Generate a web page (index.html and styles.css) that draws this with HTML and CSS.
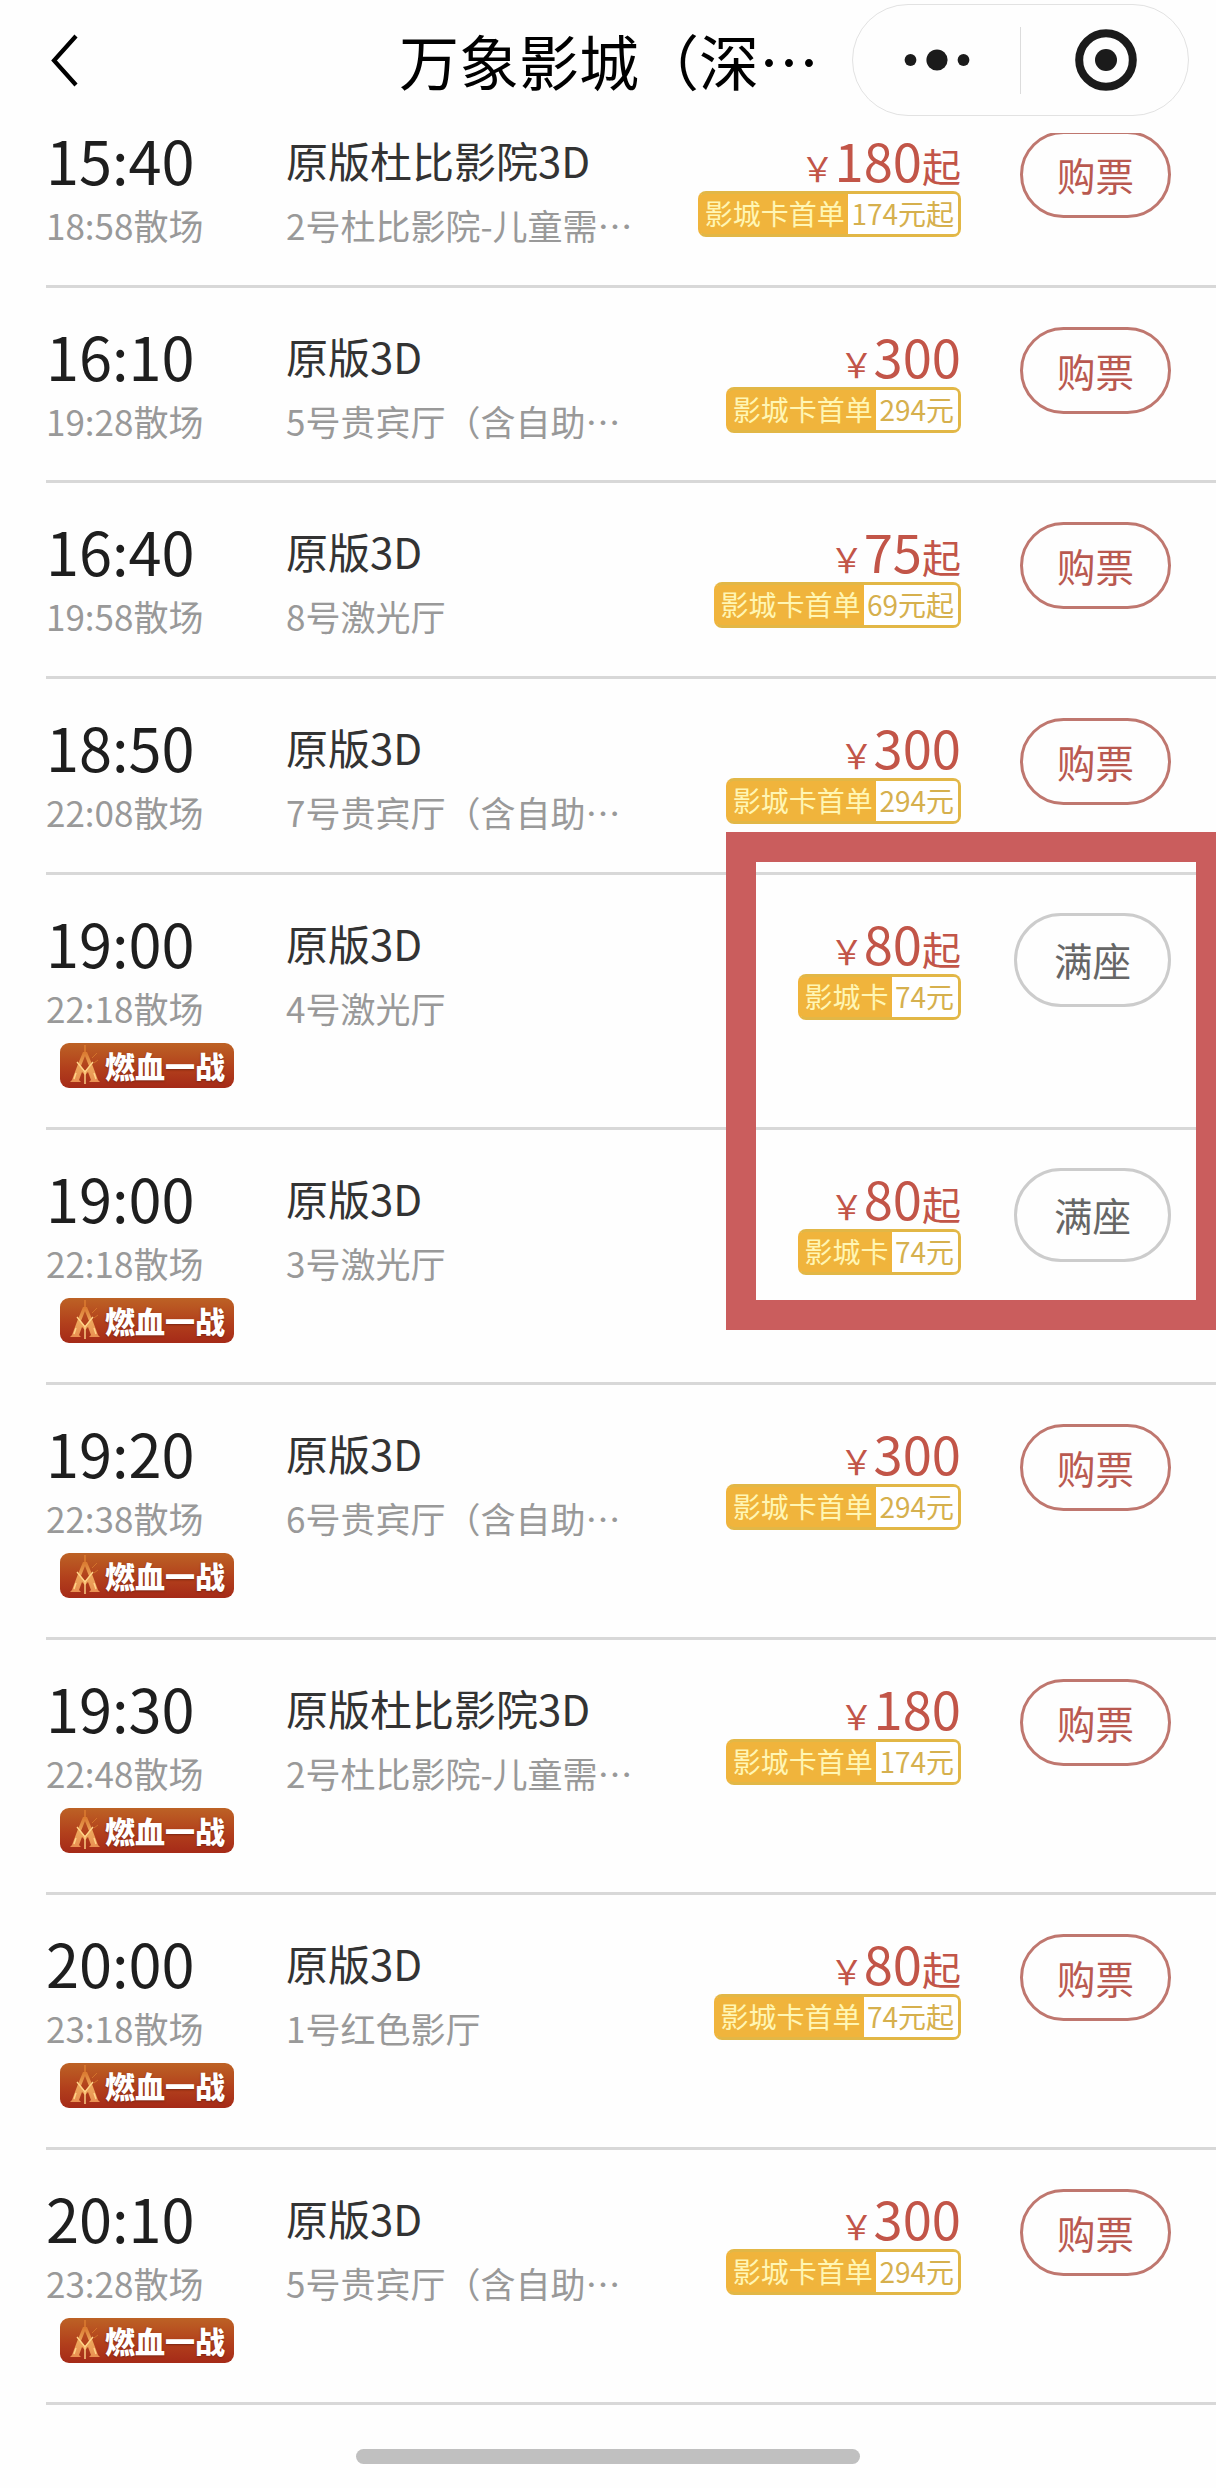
FILE: index.html
```html
<!DOCTYPE html>
<html lang="zh-CN">
<head>
<meta charset="utf-8">
<title>万象影城</title>
<link rel="stylesheet" href="styles.css">
</head>
<body>
<svg class="defs" aria-hidden="true">
  <defs>
    <linearGradient id="flame" x1="0" y1="0" x2="0" y2="1">
      <stop offset="0" stop-color="#dd7c30"/>
      <stop offset=".5" stop-color="#f3b263"/>
      <stop offset="1" stop-color="#f09a58"/>
    </linearGradient>
    <symbol id="emblem" viewBox="0 0 32 40">
      <path d="M16 0v8" stroke="#dd7c30" stroke-width="1.500"/>
      <path d="M14 7h4l5 12 6 16 2 2H20l2-2-3-8-3 3-3-3-3 8 2 2H1l2-2 6-16zM16 11l-4 10 4 5 4-5z" fill="url(#flame)" fill-rule="evenodd" opacity=".9"/>
      <path d="M8 17l8 10 8-10M16 27v12M7 28l-2 6M25 28l2 6" fill="none" stroke="#ffd58a" stroke-width="1.400"/>
      <path d="M23 13l5-5M25 18l4-3" stroke="#dd8130" stroke-width="1" opacity=".7"/>
    </symbol>
  </defs>
</svg>
<div class="page">
  <header class="navbar">
    <svg class="back" viewBox="0 0 32 56"><path d="M28 4 6 28.500 28 53" fill="none" stroke="#000" stroke-width="4.200"/></svg>
    <h1 class="title">万象影城（深…</h1>
    <div class="capsule">
      <svg class="dots" viewBox="0 0 66 24"><circle cx="6.500" cy="12" r="5.900"/><circle cx="33" cy="12" r="10.600"/><circle cx="59.500" cy="12" r="5.900"/></svg>
      <span class="split"></span>
      <svg class="target" viewBox="0 0 62 62"><circle cx="31" cy="31" r="26.800" fill="none" stroke="#1b1b1b" stroke-width="8"/><circle cx="31" cy="31" r="11"/></svg>
    </div>
  </header>
  <main class="list" id="list"></main>
  <div class="mark"></div>
  <footer class="bottom"><span class="home"></span></footer>
</div>
<script src="app.js"></script>
</body>
</html>
```
FILE: styles.css
```css
* { box-sizing: border-box; }
body {
  margin: 0;
  background: #fefefe;
  font-family: "Noto Sans CJK SC", sans-serif;
  color: #1e1e1e;
}
.defs { position: absolute; width: 0; height: 0; }
.page {
  position: relative;
  width: 1216px;
  height: 2488px;
  overflow: hidden;
  display: flex;
  flex-direction: column;
}
.navbar {
  position: relative;
  z-index: 1;
  flex: none;
  display: flex;
  height: 133px;
  padding: 4px 27px 0 48px;
  background: #fefefe;
}
.back { width: 32px; height: 56px; margin-top: 28px; }
.title {
  margin: 12px 0 0 319px;
  width: 453px;
  font-size: 60px;
  line-height: 88px;
  font-weight: 400;
  color: #000;
  white-space: nowrap;
}
.capsule {
  display: flex;
  align-items: center;
  width: 337px;
  height: 112px;
  border: 1px solid #e2e2e2;
  border-radius: 56px;
}
.capsule svg { fill: #1b1b1b; }
.dots { width: 66px; height: 24px; margin-left: 51px; }
.split { width: 1px; height: 67px; margin-left: 50px; background: #dcdcdc; }
.target { width: 62px; height: 62px; margin-left: 54px; }

.list { flex: none; margin-top: -41px; padding-left: 46px; }
.row {
  display: grid;
  grid-template-columns: 240px 1fr 290px 210px;
  height: 195.670px;
  border-bottom: 3px solid #d8d8d8;
  padding-right: 45px;
}
.row.tall { height: 255px; }
.time, .film { font-weight: 400; white-space: nowrap; }
.start { font-size: 59.500px; line-height: 88px; margin-top: 23px; }
.end, .hall { font-size: 35px; line-height: 52px; color: #999; }
.end { margin-top: -4px; }
.film .name { font-size: 42px; line-height: 62px; margin-top: 37px; color: #333; }
.film .hall { margin-top: 8px; }
.badge {
  display: flex;
  align-items: center;
  width: 174px;
  height: 45px;
  margin: 9px 0 0 14px;
  padding-left: 8px;
  border-radius: 9px;
  background: linear-gradient(#bd6225, #b2401c 55%, #a52a18);
  color: #fff;
  font-size: 30px;
  font-weight: 900;
  line-height: 45px;
  text-shadow: 0 1px 2px #7a2412;
}
.badge svg { width: 34px; height: 40px; margin-right: 3px; }
.cost { display: flex; flex-direction: column; align-items: flex-end; color: #c25548; }
.price { display: flex; align-items: baseline; height: 61px; margin-top: 37px; line-height: 61px; white-space: nowrap; }
.yen { font-size: 34px; }
.num { font-size: 52.500px; }
.from { font-size: 39px; }
.tag {
  display: flex;
  height: 46px;
  margin-top: 1px;
  border: 3px solid #e2b746;
  border-left-color: #f0b43c;
  border-radius: 8px;
  background: #f0b43c;
  color: #d6b04e;
  font-size: 28px;
  line-height: 38px;
  white-space: nowrap;
}
.tag b { padding: 0 3.500px; font-weight: 400; color: #fff6b4; }
.tag i { padding: 0 4px 0 3px; border-radius: 0 4px 4px 0; background: #fff; font-style: normal; }
.action { display: flex; justify-content: flex-end; align-items: flex-start; }
.btn {
  display: flex;
  align-items: center;
  justify-content: center;
  width: 151px;
  height: 87px;
  margin-top: 39px;
  padding-bottom: 1px;
  border: 3px solid #bf776f;
  border-radius: 44px;
  color: #b95950;
  font-size: 38.500px;
}
.btn.full { width: 157px; height: 94px; border-color: #ccc; border-radius: 47px; color: #666; margin-top: 38px; }

.mark {
  position: absolute;
  left: 726px;
  top: 832px;
  width: 500px;
  height: 498px;
  border: 30px solid #ca5d5d;
}
.bottom { display: flex; justify-content: center; padding-top: 44px; }
.home { width: 504px; height: 15px; border-radius: 8px; background: #c0c0c0; }
```
FILE: app.js
```js
// start, end, film, hall, price, "from" suffix, card label, card price, badge, sold out
const shows = [
  ["15:40", "18:58", "原版杜比影院3D", "2号杜比影院-儿童需…", 180, 1, "影城卡首单", "174元起", 0, 0],
  ["16:10", "19:28", "原版3D", "5号贵宾厅（含自助…", 300, 0, "影城卡首单", "294元", 0, 0],
  ["16:40", "19:58", "原版3D", "8号激光厅", 75, 1, "影城卡首单", "69元起", 0, 0],
  ["18:50", "22:08", "原版3D", "7号贵宾厅（含自助…", 300, 0, "影城卡首单", "294元", 0, 0],
  ["19:00", "22:18", "原版3D", "4号激光厅", 80, 1, "影城卡", "74元", 1, 1],
  ["19:00", "22:18", "原版3D", "3号激光厅", 80, 1, "影城卡", "74元", 1, 1],
  ["19:20", "22:38", "原版3D", "6号贵宾厅（含自助…", 300, 0, "影城卡首单", "294元", 1, 0],
  ["19:30", "22:48", "原版杜比影院3D", "2号杜比影院-儿童需…", 180, 0, "影城卡首单", "174元", 1, 0],
  ["20:00", "23:18", "原版3D", "1号红色影厅", 80, 1, "影城卡首单", "74元起", 1, 0],
  ["20:10", "23:28", "原版3D", "5号贵宾厅（含自助…", 300, 0, "影城卡首单", "294元", 1, 0]
];
document.getElementById("list").innerHTML = shows.map(([s, e, f, h, p, q, l, c, b, full]) => `
<section class="row${b ? " tall" : ""}">
  <div class="time"><div class="start">${s}</div><div class="end">${e}散场</div>${b ? '<div class="badge"><svg><use href="#emblem"/></svg>燃血一战</div>' : ""}</div>
  <div class="film"><div class="name">${f}</div><div class="hall">${h}</div></div>
  <div class="cost"><div class="price"><span class="yen">￥</span><span class="num">${p}</span>${q ? '<span class="from">起</span>' : ""}</div><div class="tag"><b>${l}</b><i>${c}</i></div></div>
  <div class="action"><div class="btn${full ? " full" : ""}">${full ? "满座" : "购票"}</div></div>
</section>`).join("");
```
